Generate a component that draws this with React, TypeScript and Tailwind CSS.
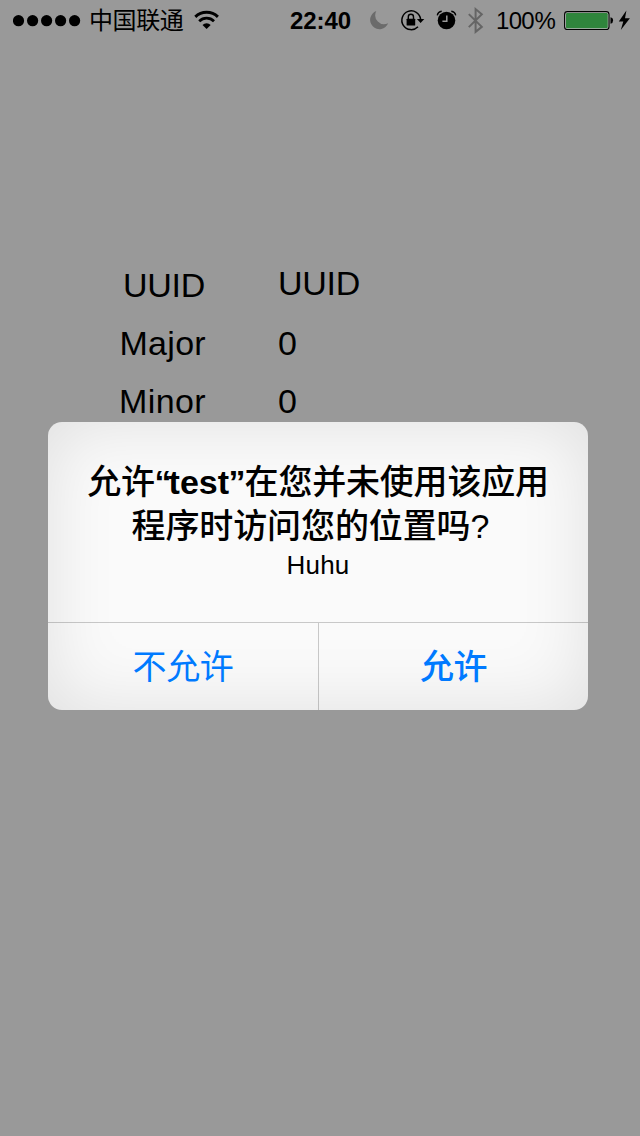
import React from "react";

const SignalDots = () => (
  <svg className="ml-[13px] h-[40px] w-[68px] shrink-0" viewBox="13 0 68 40">
    {[18.5, 32.6, 46.6, 60.6, 74.6].map((x) => (
      <circle key={x} cx={x} cy="20.7" r="5.6" />
    ))}
  </svg>
);

const Wifi = () => (
  <svg className="ml-[8px] h-[40px] w-[26px] shrink-0" viewBox="194 0 26 40" fill="none" stroke="#000">
    <path d="M195.3 16.9a16.2 16.2 0 0 1 22.6 0" strokeWidth="2.9" />
    <path d="M199.2 21.2a10.6 10.6 0 0 1 14.8 0" strokeWidth="2.8" />
    <path d="M202.5 24.9a5.8 5.8 0 0 1 8.2 0l-4.1 4.2z" fill="#000" stroke="none" />
  </svg>
);

const Moon = () => (
  <svg className="ml-[18px] h-[40px] w-[20px] shrink-0" viewBox="369 0 20 40">
    <path d="M376.3 11.1a9.3 9.3 0 1 0 11.8 12.1a8.9 8.9 0 0 1-11.8-12.1z" fill="#6b6b6b" />
  </svg>
);

const RotationLock = () => (
  <svg className="ml-[11px] h-[40px] w-[26px] shrink-0" viewBox="400 0 26 40" fill="none" stroke="#000">
    <path d="M420.6 19.2A9.4 9.4 0 1 0 418 26.8" strokeWidth="1.5" />
    <path d="M416.9 18.9h7.4l-3.7 4z" fill="#000" stroke="none" />
    <rect x="406.6" y="18.7" width="8.6" height="6.8" rx=".6" fill="#000" stroke="none" />
    <path d="M408.3 19v-2.1a2.6 2.6 0 0 1 5.2 0V19" strokeWidth="1.4" />
  </svg>
);

const Alarm = () => (
  <svg className="ml-[10px] h-[40px] w-[21px] shrink-0" viewBox="436 0 21 40" fill="none" stroke="#000">
    <circle cx="446.5" cy="20.5" r="8.8" fill="#000" stroke="none" />
    <path d="M437.3 15.3q.7-3.4 4.4-4M455.7 15.3q-.7-3.4-4.4-4" strokeWidth="1.4" />
    <path d="M446.8 15.6v5.6h-4.4" stroke="#999" strokeWidth="1.5" />
  </svg>
);

const Bluetooth = () => (
  <svg className="ml-[11px] h-[40px] w-[16px] shrink-0" viewBox="468 0 16 40">
    <path
      d="M468.8 14.1l13 12.8-6.2 5V9.1l6.2 5.2-13 12.8"
      fill="none"
      stroke="#656565"
      strokeWidth="2"
    />
  </svg>
);

const Battery = () => (
  <svg className="h-[40px] w-[67px] shrink-0" viewBox="564 0 67 40">
    <rect x="564.6" y="11.6" width="44.4" height="17.9" rx="2.8" fill="#b9b9b9" stroke="#000" strokeWidth="1.1" />
    <rect x="566" y="13" width="41.7" height="15.2" rx="1.2" fill="#2f853c" />
    <path d="M610.5 17.2q2.6.5 2.6 3.3t-2.6 3.3z" />
    <path d="M626.4 10.4l-7.6 11h4.5l-2.5 8.6 9.1-11.7h-4.9z" />
  </svg>
);

function StatusBar() {
  return (
    <header className="flex h-[40px] items-center text-black">
      <SignalDots />
      <span className="ml-[8px] w-[97px] shrink-0 whitespace-nowrap pt-[2px] text-[24px] leading-[40px] tracking-[-0.4px]">
        中国联通
      </span>
      <Wifi />
      <span className="ml-[70px] w-[61px] shrink-0 whitespace-nowrap pt-px text-[24px] font-bold leading-[40px] tracking-[-0.1px]">
        22:40
      </span>
      <Moon />
      <RotationLock />
      <Alarm />
      <Bluetooth />
      <span className="ml-[12px] flex w-[68px] shrink-0 whitespace-nowrap pt-px text-[24px] leading-[40px]">
        <span className="w-[38.5px] tracking-[-0.7px]">100</span>
        <span>%</span>
      </span>
      <Battery />
    </header>
  );
}

function BeaconFields() {
  return (
    <dl className="grid h-[382px] grid-cols-[206px_1fr] content-start gap-x-[72px] gap-y-[18px] pt-[224px] text-[34px] leading-[40px] text-black">
      <dt className="pr-px pt-px text-right tracking-[-0.3px]">UUID</dt>
      <dd className="-mt-px tracking-[-0.3px]">UUID</dd>
      <dt className="text-right tracking-[0.3px]">Major</dt>
      <dd>0</dd>
      <dt className="text-right tracking-[0.4px]">Minor</dt>
      <dd>0</dd>
    </dl>
  );
}

function PermissionAlert() {
  return (
    <section
      role="alertdialog"
      className="ml-[48px] flex h-[288px] w-[540px] flex-col overflow-hidden rounded-[14px] bg-[#fafafa] shadow-[inset_0_0_70px_rgba(0,0,0,0.11)]"
    >
      <div className="flex h-[200px] flex-col items-center pt-[38px] text-black">
        <h1 className="flex flex-col items-center text-[34px] font-medium leading-[44px]">
          <span className="flex whitespace-nowrap">
            <span className="tracking-[-0.3px]">允许</span>
            <span className="w-[14px] font-bold tracking-[-2px]">“</span>
            <span className="w-[60px] font-bold">test</span>
            <span className="w-[16px] font-bold tracking-[-2px]">”</span>
            <span className="tracking-[-0.2px]">在您并未使用该应用</span>
          </span>
          <span className="flex whitespace-nowrap tracking-[-0.1px]">
            程序时访问您的位置吗<span className="w-[34px]">?</span>
          </span>
        </h1>
        <p className="text-[26px] leading-[34px] tracking-[0.2px]">Huhu</p>
      </div>
      <div className="flex h-[88px] border-t border-black/20 text-[34px] leading-[88px] text-[#007aff]">
        <button className="w-[271px] border-r border-black/20 font-normal tracking-[-0.4px]">不允许</button>
        <button className="flex-1 font-medium tracking-[-0.4px]">允许</button>
      </div>
    </section>
  );
}

export default function App() {
  return (
    <main className="h-[1136px] w-[640px] overflow-hidden bg-[#999999] font-['Liberation_Sans','Noto_Sans_CJK_SC',sans-serif]">
      <StatusBar />
      <BeaconFields />
      <PermissionAlert />
    </main>
  );
}
